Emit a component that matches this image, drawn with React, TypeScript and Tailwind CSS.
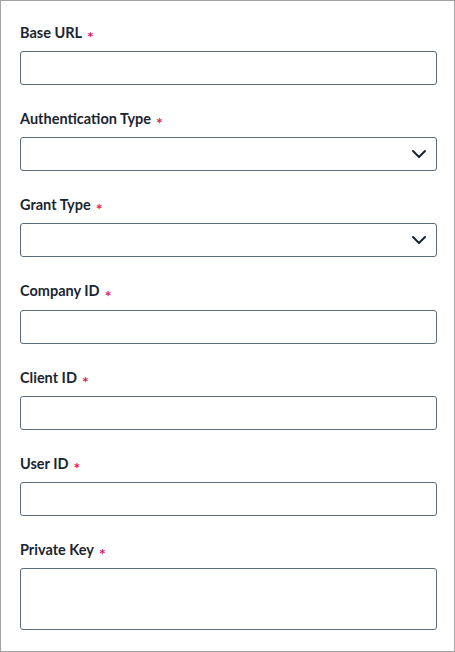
const fields = [
  { label: "Base URL", kind: "input" },
  { label: "Authentication Type", kind: "select" },
  { label: "Grant Type", kind: "select" },
  { label: "Company ID", kind: "input" },
  { label: "Client ID", kind: "input" },
  { label: "User ID", kind: "input" },
  { label: "Private Key", kind: "textarea" },
];

function Chevron() {
  return (
    <svg width="16" height="16" viewBox="0 0 16 16" fill="none" className="absolute right-[10px] top-1/2 -translate-y-1/2">
      <path d="M2 5l6 6 6-6" stroke="#1b2532" strokeWidth="2" strokeLinecap="round" strokeLinejoin="round" />
    </svg>
  );
}

export default function App() {
  return (
    <div className="w-[455px] h-[652px] border border-[#a3a3a3] bg-white pl-[19px] pr-[17px] pt-[22px]" style={{ fontFamily: "Lato, 'Open Sans', sans-serif" }}>
      <div className="flex flex-col gap-[24.2px]">
        {fields.map((f) => (
          <div key={f.label} className="flex flex-col">
            <label className="h-[20px] flex items-center text-[14.5px] font-bold text-[#1b2532] leading-none">
              {f.label}
              <span className="ml-[5px] relative top-[4px] text-[#e3195f] text-[16px] font-bold">*</span>
            </label>
            <div className="relative mt-[8px]">
              {f.kind === "textarea" ? (
                <textarea className="block w-full h-[62px] rounded-[3px] border border-[#5b6b79] resize-none outline-none" />
              ) : (
                <input className="block w-full h-[34px] rounded-[3px] border border-[#5b6b79] outline-none" readOnly />
              )}
              {f.kind === "select" && <Chevron />}
            </div>
          </div>
        ))}
      </div>
    </div>
  );
}
